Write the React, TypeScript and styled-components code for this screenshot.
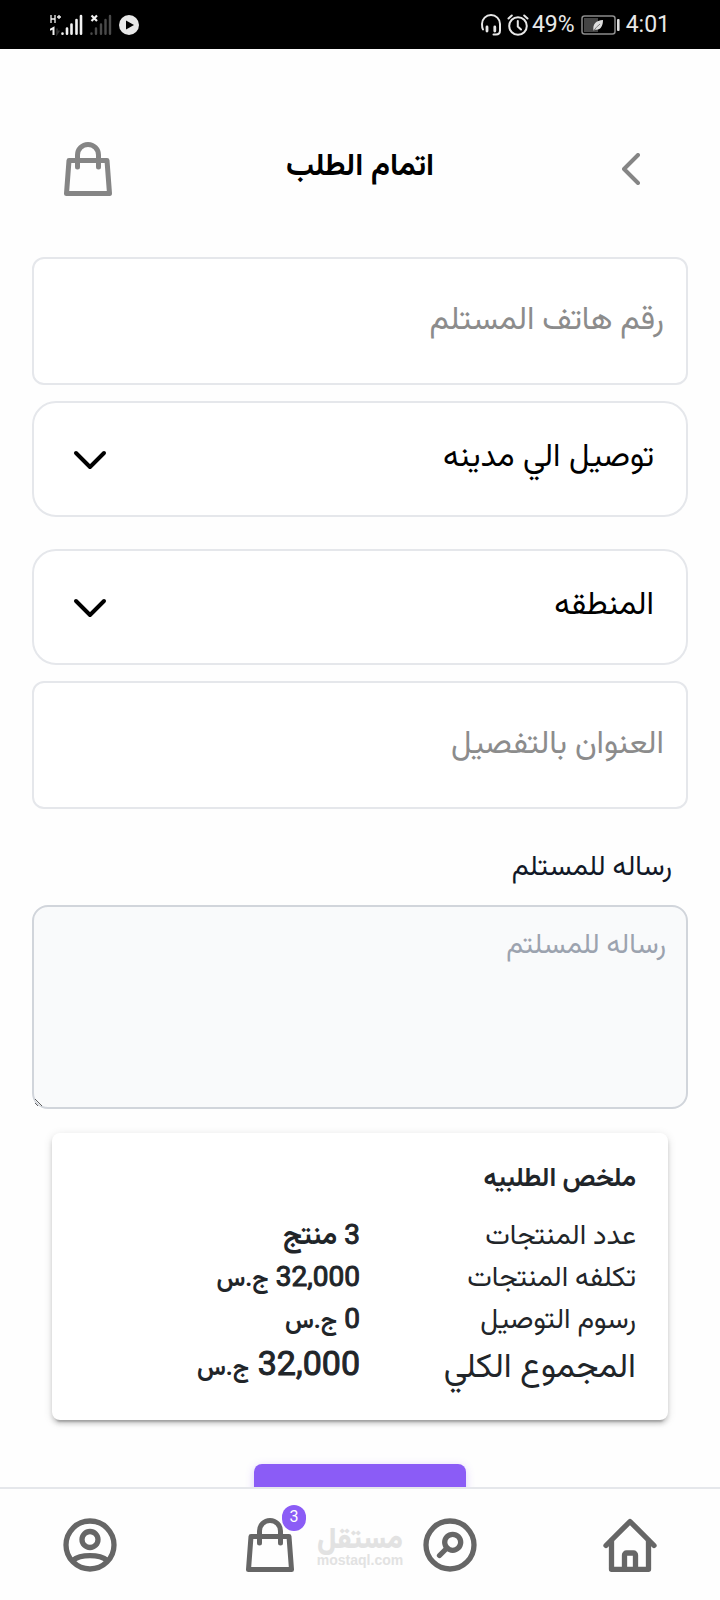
import React from "react";
import styled, { createGlobalStyle } from "styled-components";

const fontStack = `Roboto, Vazirmatn, "Noto Sans Arabic", "DejaVu Sans", sans-serif`;
const arabicStack = `Vazirmatn, "Noto Sans Arabic", "DejaVu Sans", sans-serif`;

const GlobalStyle = createGlobalStyle`
  *, *::before, *::after { box-sizing: border-box; }
  body { margin: 0; background: #fff; font-family: ${fontStack}; }
`;

const Screen = styled.div`
  display: flex;
  flex-direction: column;
  height: 100vh;
  background: #fefefe;
  color: #000;
`;

const StatusBar = styled.div`
  flex: none;
  display: flex;
  justify-content: space-between;
  align-items: center;
  height: 49px;
  padding: 0 50px;
  background: #000;
  color: #e8e8e8;
  font-size: 23px;
  line-height: 28px;
`;

const StatusGroup = styled.div<{ $gap: number }>`
  display: flex;
  align-items: center;
  gap: ${(p) => p.$gap}px;
`;

const Content = styled.main`
  flex: 1;
  min-height: 0;
  overflow-y: auto;
  scrollbar-width: none;
  padding: 80px 32px 32px;
`;

const Header = styled.header`
  display: grid;
  grid-template-columns: 1fr auto 1fr;
  align-items: center;
  height: 80px;
  padding: 0 29px;
`;

const Title = styled.h1`
  margin: 0;
  padding-bottom: 8px;
  font-size: 31px;
  line-height: 40px;
  font-weight: 700;
`;

const IconButton = styled.button<{ $align: "start" | "end"; $inset: number }>`
  display: flex;
  justify-self: ${(p) => p.$align};
  padding: 0 ${(p) => p.$inset}px;
  border: 0;
  background: none;
  color: #858585;
`;

const Form = styled.form`
  display: flex;
  flex-direction: column;
  margin-top: 48px;
`;

const TextField = styled.input`
  width: 100%;
  height: 128px;
  padding: 0 22px 6px;
  border: 2px solid #e5e7eb;
  border-radius: 12px;
  background: #fff;
  font: 400 32px/48px ${fontStack};
  &::placeholder { color: #8c8c8c; opacity: 1; }
`;

const SelectWrap = styled.div`
  position: relative;
  margin: 16px 0;
  & + & { margin-top: 16px; }
`;

const Select = styled.select`
  display: block;
  appearance: none;
  width: 100%;
  height: 116px;
  padding: 0 32px 2px;
  border: 2px solid #e5e7eb;
  border-radius: 24px;
  background: #fff;
  color: #000;
  font: 400 32px/48px ${arabicStack};
`;

const SelectArrow = styled.svg`
  position: absolute;
  left: 41px;
  top: 50%;
  margin-top: -9px;
  pointer-events: none;
`;

const MessageLabel = styled.label`
  margin: 37px 16px 0;
  font-size: 28px;
  line-height: 40px;
  color: #111827;
`;

const Message = styled.textarea`
  width: 100%;
  height: 204px;
  margin-top: 19px;
  padding: 17px 20px;
  border: 2px solid #d1d5db;
  border-radius: 16px;
  background: #f9fafb;
  font: 400 28px/40px ${fontStack};
  &::placeholder { color: #9ca3af; opacity: 1; }
`;

const Summary = styled.section`
  margin: 24px 20px 0;
  padding: 24px 32px 30px;
  border-radius: 8px;
  background: #fff;
  color: #212529;
  box-shadow: 0 6px 2px -4px rgba(0, 0, 0, 0.2), 0 4px 4px rgba(0, 0, 0, 0.14),
    0 2px 10px rgba(0, 0, 0, 0.12);
`;

const SummaryTitle = styled.h2`
  margin: 0 0 17px;
  font-size: 26px;
  line-height: 40px;
  font-weight: 700;
`;

const SummaryTable = styled.table`
  width: 100%;
  border-collapse: collapse;
  table-layout: fixed;
`;

const SummaryRow = styled.tr<{ $total?: boolean }>`
  height: ${(p) => (p.$total ? 50 : 42)}px;
  font-size: ${(p) => (p.$total ? 34 : 28)}px;
  line-height: 40px;
`;

const RowLabel = styled.th`
  padding: 0;
  font-weight: 400;
  text-align: right;
`;

const RowValue = styled.td<{ $total?: boolean }>`
  padding: 0;
  font-size: ${(p) => (p.$total ? 34 : 28)}px;
  text-align: right;
`;

const Amount = styled.span`
  -webkit-text-stroke: 1px currentColor;
`;

const Unit = styled.span<{ $currency: boolean }>`
  font-size: ${(p) => (p.$currency ? 24 : 28)}px;
  font-weight: 700;
`;

const Submit = styled.button`
  align-self: center;
  width: 212px;
  height: 80px;
  margin-top: 44px;
  border: 0;
  border-radius: 8px;
  background: #8b5cf6;
  color: #fff;
  font: 500 28px/40px ${fontStack};
  box-shadow: 0 2px 8px rgba(139, 92, 246, 0.3);
`;

const BottomNav = styled.nav`
  position: relative;
  flex: none;
  display: grid;
  grid-template-columns: repeat(4, 1fr);
  height: 113px;
  border-top: 2px solid #e5e7eb;
  background: #fefefe;
`;

const NavLink = styled.a`
  display: flex;
  align-items: center;
  justify-content: center;
  color: #666;
`;

const NavIcon = styled.span`
  position: relative;
  display: flex;
`;

const Badge = styled.span`
  position: absolute;
  left: 39px;
  top: -13px;
  width: 24px;
  height: 26px;
  border-radius: 12px;
  background: #8b5cf6;
  color: #fff;
  font-size: 16px;
  line-height: 24px;
  text-align: center;
`;

const Watermark = styled.div`
  position: absolute;
  left: 50%;
  top: 35px;
  transform: translateX(-50%);
  display: flex;
  flex-direction: column;
  align-items: center;
  color: #e2e2e2;
  pointer-events: none;
`;

const WatermarkName = styled.span`
  font-size: 29px;
  line-height: 28px;
  font-weight: 900;
`;

const WatermarkUrl = styled.span`
  font: 700 14px/16px "Liberation Sans", Arial, sans-serif;
`;

const BagIcon = () => (
  <svg width="54" height="54" viewBox="0 0 54 54" fill="none" stroke="currentColor" strokeWidth="5" strokeLinecap="round" strokeLinejoin="round" aria-hidden="true">
    <path d="M8 18.5H46L48.500 51.5H5.500Z" />
    <path d="M16.500 25V13a10.500 10.500 0 0 1 21 0V25" />
  </svg>
);

const BackIcon = () => (
  <svg width="18" height="32" viewBox="0 0 18 32" fill="none" stroke="currentColor" strokeWidth="4" strokeLinecap="round" strokeLinejoin="round" aria-hidden="true">
    <path d="M16 2L2 16L16 30" />
  </svg>
);

const UserIcon = () => (
  <svg width="54" height="54" viewBox="0 0 54 54" fill="none" stroke="currentColor" strokeWidth="5.300" aria-hidden="true">
    <circle cx="27" cy="27" r="24" />
    <circle cx="27" cy="21.500" r="8" />
    <path d="M9.500 42.500C14 39 20 37.700 27 37.700S40 39 44.500 42.500" />
  </svg>
);

const SearchIcon = () => (
  <svg width="54" height="54" viewBox="0 0 54 54" fill="none" stroke="currentColor" strokeWidth="5.300" strokeLinecap="round" aria-hidden="true">
    <circle cx="27" cy="27" r="24" />
    <circle cx="29.700" cy="24.300" r="8" />
    <path d="M24 30L16.500 37.500" />
  </svg>
);

const HomeIcon = () => (
  <svg width="54" height="54" viewBox="0 0 54 54" fill="none" stroke="currentColor" strokeWidth="5.300" strokeLinecap="round" strokeLinejoin="round" aria-hidden="true">
    <path d="M3 27.500L27 3.500L51 27.500" />
    <path d="M8.500 23V51.300H45.500V23" />
    <path d="M21.500 51V37a2 2 0 0 1 2-2h7a2 2 0 0 1 2 2V51" />
  </svg>
);

const SignalIcon = () => (
  <svg width="33" height="22" viewBox="0 0 33 22" fill="none" stroke="#f2f2f2" strokeLinecap="round" aria-hidden="true">
    <path d="M1 1V9M5 1V9M1 5H5" strokeWidth="1.300" strokeLinecap="butt" />
    <path d="M7 3H11M9 1V5" strokeWidth="1.300" strokeLinecap="butt" />
    <path d="M0 16L3.500 14V21" strokeWidth="2" strokeLinecap="butt" />
    <path d="M7 15V20L9 17" stroke="#333" strokeWidth="1.500" />
    <path d="M12.500 19.500V19.800M17 14.500V19.800M21.500 10.500V19.800M26.500 6V19.800M31 2V19.800" strokeWidth="2.600" />
  </svg>
);

const NoSignalIcon = () => (
  <svg width="22" height="22" viewBox="0 0 22 22" fill="none" stroke="#4a4a4a" strokeLinecap="round" aria-hidden="true">
    <path d="M1.500 19.500V19.800M6 14.500V19.800M11 10.500V19.800M15.500 6V19.800M20 2V19.800" strokeWidth="2.400" />
    <path d="M1.500 1.500L7 7M7 1.500L1.500 7" stroke="#f2f2f2" strokeWidth="2.200" strokeLinecap="butt" />
  </svg>
);

const PlayIcon = () => (
  <svg width="20" height="22" viewBox="0 0 20 22" aria-hidden="true">
    <circle cx="10" cy="11" r="10" fill="#e8e8e8" />
    <path d="M7 6.500L15 11L7 15.500Z" fill="#000" />
  </svg>
);

const HeadsetIcon = () => (
  <svg width="20" height="22" viewBox="0 0 20 22" fill="none" stroke="#e8e8e8" strokeWidth="2" strokeLinecap="round" aria-hidden="true">
    <path d="M2 15.500C1 14 1 11 1 10a9 9 0 0 1 18 0V16.500Q19 20.500 15 20.500H12.500" />
    <path d="M6 13V17M13.800 13V17" strokeWidth="2.800" />
  </svg>
);

const AlarmIcon = () => (
  <svg width="22" height="22" viewBox="0 0 22 22" fill="none" stroke="#e8e8e8" strokeWidth="2" strokeLinecap="round" aria-hidden="true">
    <circle cx="11" cy="12" r="8.800" />
    <path d="M10.800 7V12.500L14 15.500M1.500 4.500L4.800 1.500M20.500 4.500L17.200 1.500" />
  </svg>
);

const BatteryIcon = () => (
  <svg width="39" height="20" viewBox="0 0 39 20" aria-hidden="true">
    <rect x="1" y="1" width="33" height="18" rx="2.500" fill="none" stroke="#8c8c8c" strokeWidth="1.500" />
    <rect x="3" y="3" width="14" height="14" fill="#444" />
    <rect x="36" y="4" width="2.600" height="12" rx="1" fill="#e0e0e0" />
    <path d="M12.500 15.500C11.500 9 15 5.500 22 5C22 11.500 19 16 13.500 14.500Z" fill="#ddd" />
    <path d="M12.500 16Q15 12 19 9" stroke="#777" fill="none" />
  </svg>
);

const rows = [
  { label: "عدد المنتجات", amount: "3", unit: "منتج", currency: false },
  { label: "تكلفه المنتجات", amount: "32,000", unit: "ج.س", currency: true },
  { label: "رسوم التوصيل", amount: "0", unit: "ج.س", currency: true },
  { label: "المجموع الكلي", amount: "32,000", unit: "ج.س", currency: true, total: true },
];

const SelectField = ({ name }: { name: string }) => (
  <SelectWrap>
    <Select aria-label={name} defaultValue="">
      <option value="">{name}</option>
    </Select>
    <SelectArrow width="34" height="20" viewBox="0 0 34 20" fill="none" stroke="#000" strokeWidth="4" strokeLinecap="round" strokeLinejoin="round" aria-hidden="true">
      <path d="M3 3L17 17L31 3" />
    </SelectArrow>
  </SelectWrap>
);

export default function App() {
  return (
    <Screen dir="rtl" lang="ar">
      <GlobalStyle />
      <StatusBar dir="ltr">
        <StatusGroup $gap={7}>
          <SignalIcon />
          <NoSignalIcon />
          <PlayIcon />
        </StatusGroup>
        <StatusGroup $gap={6}>
          <StatusGroup $gap={3}>
            <StatusGroup $gap={6}>
              <HeadsetIcon />
              <AlarmIcon />
            </StatusGroup>
            <span>49%</span>
          </StatusGroup>
          <BatteryIcon />
          <span>4:01</span>
        </StatusGroup>
      </StatusBar>

      <Content>
        <Header>
          <IconButton type="button" aria-label="رجوع" $align="start" $inset={19}>
            <BackIcon />
          </IconButton>
          <Title>اتمام الطلب</Title>
          <IconButton type="button" aria-label="السلة" $align="end" $inset={0}>
            <BagIcon />
          </IconButton>
        </Header>

        <Form onSubmit={(e) => e.preventDefault()}>
          <TextField type="tel" dir="rtl" placeholder="رقم هاتف المستلم" aria-label="رقم هاتف المستلم" />
          <SelectField name="توصيل الي مدينه" />
          <SelectField name="المنطقه" />
          <TextField type="text" placeholder="العنوان بالتفصيل" aria-label="العنوان بالتفصيل" />
          <MessageLabel htmlFor="message">رساله للمستلم</MessageLabel>
          <Message id="message" placeholder="رساله للمسلتم" />

          <Summary>
            <SummaryTitle>ملخص الطلبيه</SummaryTitle>
            <SummaryTable>
              <tbody>
                {rows.map((r) => (
                  <SummaryRow key={r.label} $total={r.total}>
                    <RowLabel scope="row">{r.label}</RowLabel>
                    <RowValue $total={r.total}>
                      <Amount>{r.amount}</Amount> <Unit $currency={r.currency}>{r.unit}</Unit>
                    </RowValue>
                  </SummaryRow>
                ))}
              </tbody>
            </SummaryTable>
          </Summary>

          <Submit type="submit" aria-label="اتمام الطلب" />
        </Form>
      </Content>

      <BottomNav>
        <NavLink href="#home" aria-label="الرئيسية">
          <HomeIcon />
        </NavLink>
        <NavLink href="#search" aria-label="بحث">
          <SearchIcon />
        </NavLink>
        <NavLink href="#cart" aria-label="السلة">
          <NavIcon>
            <BagIcon />
            <Badge>3</Badge>
          </NavIcon>
        </NavLink>
        <NavLink href="#profile" aria-label="حسابي">
          <UserIcon />
        </NavLink>
        <Watermark>
          <WatermarkName>مستقل</WatermarkName>
          <WatermarkUrl>mostaql.com</WatermarkUrl>
        </Watermark>
      </BottomNav>
    </Screen>
  );
}
